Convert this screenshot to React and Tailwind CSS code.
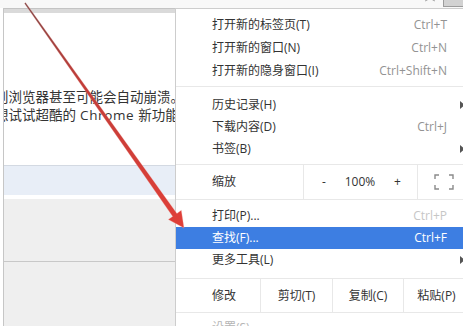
import React from "react";

const font = "[font-family:'Open_Sans','Noto_Sans_CJK_SC',sans-serif]";

function Item({ label, shortcut, arrow, active, disabled, className = "" }) {
  return (
    <div
      className={`flex h-[22px] items-center pl-[36px] text-[12px] ${
        active ? "bg-[#3d7ee2] text-white" : "text-[#333]"
      } ${className}`}
    >
      <span className="min-w-0 flex-1 whitespace-nowrap">{label}</span>
      {shortcut && (
        <span
          className={`whitespace-nowrap ${
            active ? "text-white" : disabled ? "text-[#c6c6c6]" : "text-[#939393]"
          }`}
        >
          {shortcut}
        </span>
      )}
      <span className="flex w-[16px] shrink-0 items-center justify-end">
        {arrow && (
          <span className="-mr-[2px] h-0 w-0 border-y-[4px] border-l-[5px] border-y-transparent border-l-[#555]" />
        )}
      </span>
    </div>
  );
}

const Sep = ({ className = "" }) => <div className={`h-px bg-[#e8e8e8] ${className}`} />;

export default function App() {
  return (
    <div className={`relative h-[326px] w-[463px] overflow-hidden bg-white ${font}`}>
      {/* toolbar edge */}
      <div className="flex h-[8px] justify-end bg-[#f8f8f8]">
        <svg className="-mt-[13px] mr-[5px] h-[16px] w-[16px]" viewBox="0 0 16 16" fill="none" stroke="#9a9a9a" strokeWidth="1.2">
          <path d="M8 1.5l1.9 4.1 4.5.4-3.4 3 1 4.4L8 11.1l-4 2.3 1-4.4-3.4-3 4.5-.4z" />
        </svg>
        <div className="h-[7px] w-[20px] border-b border-l border-[#9c9c9c] bg-[#d2d2d2]" />
      </div>

      <div className="flex h-[318px]">
        {/* page behind the menu */}
        <div className="flex w-[175px] shrink-0 flex-col pl-[3px]">
          <div className="flex flex-1 flex-col border-l border-[#c6c6c6]">
            <div className="h-[5px] border-t border-[#c4c4c4] bg-[#dadada]" />
            <div className="h-[152px] overflow-hidden pt-[75px] text-[13.5px] leading-[18px] text-[#333]">
              <p className="-ml-[9px] whitespace-nowrap">则浏览器甚至可能会自动崩溃。</p>
              <p className="-ml-[9px] whitespace-nowrap">
                想试试超酷的<span className="tracking-[0.6px]"> Chrome </span>新功能
              </p>
            </div>
            <div className="h-[30px] border-t border-[#d3d9e2] bg-[#e8eef7]" />
            <div className="h-[4px] bg-white" />
            <div className="h-[63px] border-b border-[#c8c8c8] bg-[#efefef]" />
            <div className="flex-1 bg-[#efefef]" />
          </div>
        </div>

        {/* chrome menu */}
        <div className="w-[288px] min-w-0 shrink-0 overflow-hidden border-l border-t border-[#cdcdcd] bg-white">
          <div className="pt-[4px]">
            <Item label="打开新的标签页(T)" shortcut="Ctrl+T" className="h-[23px]" />
            <Item label="打开新的窗口(N)" shortcut="Ctrl+N" className="h-[23px]" />
            <Item label="打开新的隐身窗口(I)" shortcut="Ctrl+Shift+N" className="h-[23px]" />
          </div>
          <Sep className="mt-[4px]" />
          <div className="pt-[7px]">
            <Item label="历史记录(H)" arrow />
            <Item label="下载内容(D)" shortcut="Ctrl+J" />
            <Item label="书签(B)" arrow />
          </div>

          <div className="mt-[4px] flex h-[36px] border-y border-[#e8e8e8] text-[12px] text-[#333]">
            <div className="flex w-[127px] shrink-0 items-center pl-[36px]">缩放</div>
            <div className="grid w-[115px] shrink-0 grid-cols-[40px_32px_43px] items-center border-x border-[#e8e8e8] text-center">
              <span>-</span>
              <span>100%</span>
              <span>+</span>
            </div>
            <div className="flex flex-1 items-center justify-center pl-[6px]">
              <svg width="20" height="16" viewBox="0 0 20 16" fill="none" stroke="#8a8a8a" strokeWidth="1.4">
                <path d="M1 5V1h4M15 1h4v4M19 11v4h-4M5 15H1v-4" />
              </svg>
            </div>
          </div>

          <div className="pt-[5px]">
            <Item label="打印(P)..." shortcut="Ctrl+P" disabled />
            <Item label="查找(F)..." shortcut="Ctrl+F" active />
            <Item label="更多工具(L)" arrow />
          </div>

          <div className="mt-[7px] flex h-[35px] border-y border-[#e8e8e8] text-[12px] text-[#333]">
            <div className="flex w-[84px] shrink-0 items-center pl-[36px]">修改</div>
            <div className="flex w-[72px] shrink-0 items-center justify-center border-l border-[#e8e8e8]">剪切(T)</div>
            <div className="flex w-[71px] shrink-0 items-center justify-center border-l border-[#e8e8e8]">复制(C)</div>
            <div className="flex w-[66px] shrink-0 items-center justify-center border-l border-[#e8e8e8]">粘贴(P)</div>
          </div>
          <div className="pt-[4px]">
            <Item label="设置(S)" className="text-[#b5b5b5]" />
          </div>
        </div>
      </div>

      {/* red annotation arrow */}
      <svg className="pointer-events-none absolute inset-0" width="463" height="326" viewBox="0 0 463 326">
        <defs>
          <linearGradient id="arrowFill" gradientUnits="userSpaceOnUse" x1="25" y1="3" x2="184" y2="228">
            <stop offset="0" stopColor="#7e4444" />
            <stop offset="0.35" stopColor="#c23d39" />
            <stop offset="1" stopColor="#e03f38" />
          </linearGradient>
        </defs>
        <polygon
          points="25.5,2.6 176.9,213.4 181.3,210.3 184,228 168.3,219.5 172.7,216.4 24.5,3.4"
          fill="url(#arrowFill)"
          stroke="#f3b3ad"
          strokeOpacity="0.35"
          strokeWidth="0.8"
          strokeLinejoin="round"
        />
      </svg>
    </div>
  );
}
